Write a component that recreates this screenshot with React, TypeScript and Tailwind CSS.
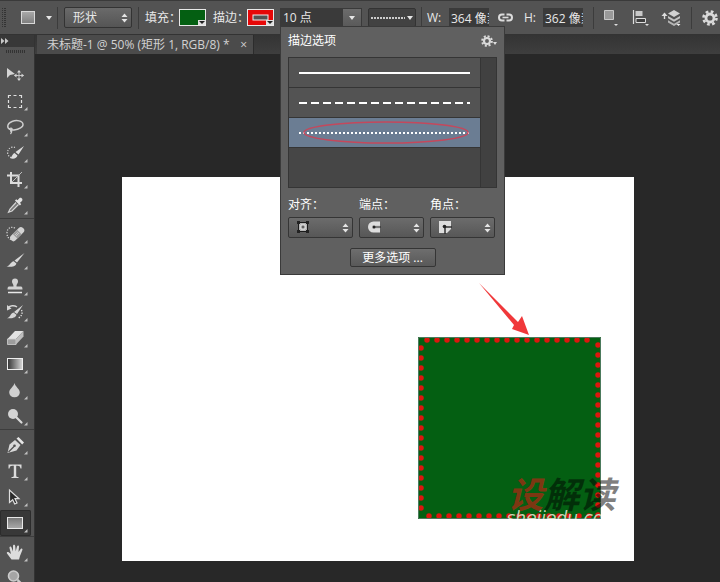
// Image editor window: options bar, tool column, document canvas and the
// stroke options panel that hangs from the stroke width field.
import { useState } from "react";
import type { ReactNode } from "react";

const TOOL_GROUPS = [
  ["move", "marquee", "lasso", "quick-select", "crop", "eyedropper"],
  ["healing", "brush", "stamp", "history-brush", "eraser", "gradient", "blur", "dodge"],
  ["pen", "type", "path-select", "rectangle"],
  ["hand", "zoom"],
];

const TOOL_ART: Record<string, ReactNode> = {
  move: (
    <>
      <path d="M2 3v10l3-3 5-1z" fill="#d4d4d4" />
      <path d="M14 6v9M9.500 10.500h9" stroke="#c4c4c4" strokeWidth="1" />
      <path d="M14 5l2 2.500h-4zM14 16l2-2.500h-4zM9 10.500l2.500-2v4zM19 10.500l-2.500-2v4z" fill="#d4d4d4" />
    </>
  ),
  marquee: (
    <path d="M3.500 7V4.500H6M8.500 4.500h3M14 4.500h2.500V7M16.500 9v3M16.500 14v2.500H14M11.500 16.500h-3M6 16.500H3.500V14M3.500 12V9" fill="none" stroke="#e0e0e0" strokeWidth="1.200" />
  ),
  lasso: (
    <path d="M5 12.500C1.500 11 2 6.500 7 4.500s10.500-.5 11 2.500-4 5.500-9 6c-2.500.2-4-.4-4-1.200s1.500-1 2 0-.5 2.200-2 2.200M6.500 13c.5 1.500 0 3-1 4" fill="none" stroke="#cfcfcf" strokeWidth="1.400" />
  ),
  "quick-select": (
    <>
      <path d="M10 4.500A5 5 0 1 0 6 14.500" fill="none" stroke="#d8d8d8" strokeWidth="1.200" strokeDasharray="1.200 1.400" />
      <path d="M19 3l-5.500 8.500-3-2.500zM9.500 10l3 2.500c-.5 3-4.500 4-7.500 2.500 2-.5 2-4 4.500-5z" fill="#dedede" />
    </>
  ),
  crop: (
    <>
      <path d="M6 3v11h11M2 6.500h11.500V18" fill="none" stroke="#dcdcdc" strokeWidth="2" />
      <path d="M7 13l10-10" stroke="#bdbdbd" strokeWidth="1" />
    </>
  ),
  eyedropper: (
    <>
      <path d="M10 5.500l1.200-1.200 1.300 1 1.800-2c1.700-1.500 4.200 1 2.700 2.700l-2 1.800 1.200 1.400-1.300 1.300z" fill="#e2e2e2" />
      <path d="M11 7.500L5 14l-1.500 3.200L7 16l6.500-6.500" fill="#777" stroke="#d5d5d5" strokeWidth="1.200" />
    </>
  ),
  healing: (
    <>
      <path d="M10 4C5 2 2 5 2 9s2 6 4 6.500" fill="none" stroke="#d8d8d8" strokeWidth="1.200" strokeDasharray="1.200 1.400" />
      <g transform="rotate(-45 12 10)">
        <rect x="3.500" y="7" width="17" height="6.500" rx="3" fill="#d2d2d2" />
        <rect x="9" y="7" width="6" height="6.500" fill="#999" />
        <path d="M10.500 8.500v4M12 8.500v4M13.500 8.500v4" stroke="#eee" strokeWidth=".8" strokeDasharray="1 1" />
      </g>
    </>
  ),
  brush: (
    <path d="M19.500 3l-7.500 9.500-2.500-2zM8.800 11.200l2.600 2.200c-1 3.600-6 3.600-9.900 3.200 3.500-.6 4-5 7.300-5.400z" fill="#d8d8d8" />
  ),
  stamp: (
    <>
      <path d="M10 2.500a3 3 0 0 1 3 3c0 2-1.500 2-1.500 5h4.500c1 0 1.500 1 1.500 3h-15c0-2 .5-3 1.500-3h4.500c0-3-1.500-3-1.500-5a3 3 0 0 1 3-3z" fill="#d2d2d2" />
      <path d="M3 16.500h14" stroke="#e8e8e8" strokeWidth="1.500" />
    </>
  ),
  "history-brush": (
    <>
      <path d="M18 3l-6 9-3-2zM8.500 10.500l3 2.200c-1 3.500-5.500 3.800-9.500 3.500 3.500-1 3.500-5 6.500-5.700z" fill="#d5d5d5" />
      <path d="M3 6c2-2.500 6-3 9-1" fill="none" stroke="#d5d5d5" strokeWidth="1.500" />
      <path d="M2 3v5.500l4.500-2z" fill="#d5d5d5" />
      <path d="M16.500 8c1.500 3 0 6.500-3 8" fill="none" stroke="#e5e5e5" strokeWidth="1.300" strokeDasharray="1.300 1.300" />
    </>
  ),
  eraser: (
    <>
      <path d="M10 3h8.500L11 11H2.500z" fill="#e2e2e2" />
      <path d="M2.500 11H11v5.500H2.500z" fill="#9d9d9d" stroke="#d0d0d0" strokeWidth=".8" />
      <path d="M18.500 3v5.500L11 16.500V11z" fill="#bdbdbd" />
    </>
  ),
  gradient: (
    <>
      <defs>
        <linearGradient id="ramp">
          <stop offset="0" stopColor="#333" />
          <stop offset="1" stopColor="#d8d8d8" />
        </linearGradient>
      </defs>
      <rect x="2.500" y="4.500" width="15" height="11" fill="url(#ramp)" stroke="#eee" />
    </>
  ),
  blur: <path d="M9.500 3c1 4 5.300 6 5.300 9.500a5.300 4.800 0 0 1-10.600 0C4.200 9 8.500 7 9.500 3z" fill="#d0d0d0" />,
  dodge: (
    <>
      <circle cx="8" cy="8" r="5" fill="#d4d4d4" />
      <path d="M11.500 11.500l5 5" stroke="#d8d8d8" strokeWidth="2.200" strokeLinecap="round" />
    </>
  ),
  pen: (
    <>
      <path d="M2.500 18l2-8.500L10 5l5.500 5-4 5.500z" fill="#d8d8d8" />
      <path d="M11.500 3.500l2-1.500L19 7.500l-1.800 2z" fill="#e6e6e6" />
      <path d="M3.500 17l5.500-5.500" stroke="#505050" strokeWidth="1.200" />
      <circle cx="9.500" cy="10.800" r="1.300" fill="#505050" />
    </>
  ),
  type: (
    <path d="M3.500 3.500h13v4h-1c-.4-2-1-2.700-3-2.700h-1.300v9.700c0 1.200.5 1.500 2.300 1.600v.9h-7v-.9c1.800-.1 2.300-.4 2.300-1.600V4.800H7.500c-2 0-2.600.7-3 2.700h-1z" fill="#dcdcdc" />
  ),
  "path-select": (
    <path d="M4.500 3v12.500l3.200-2.800 2 4.300 2.300-1-2-4.300h4z" fill="#2b2b2b" stroke="#dedede" strokeWidth="1.200" />
  ),
  rectangle: (
    <>
      <defs>
        <linearGradient id="plate" x2="0" y2="1">
          <stop offset="0" stopColor="#777" />
          <stop offset="1" stopColor="#aaa" />
        </linearGradient>
      </defs>
      <rect x="2.500" y="4.500" width="15" height="11" fill="url(#plate)" stroke="#e8e8e8" />
    </>
  ),
  hand: (
    <path d="M6.500 17.500L2 11.500c-.8-1.300.8-2 1.700-1.200L6 12 4.500 6C4.200 4.500 6 4 6.500 5.400L8 9.500 8 4c0-1.600 2-1.600 2.200 0l.5 5.300L12 4.500c.4-1.400 2.200-1.100 2 .4L13.500 10l2-2.800c.8-1.200 2.400-.4 1.900.9L15 14l-1 3.500z" fill="#dcdcdc" />
  ),
  zoom: (
    <>
      <circle cx="8.500" cy="8" r="5" fill="#a5a5a5" stroke="#ccc" strokeWidth="1.600" />
      <path d="M12.500 12l5 5" stroke="#ccc" strokeWidth="2.500" />
    </>
  ),
};

function Gear({ size }: { size: number }) {
  return (
    <svg width={size} height={size} viewBox="0 0 16 16" className="block shrink-0">
      <circle cx="8" cy="8" r="6.500" fill="none" stroke="#dadada" strokeWidth="2.600" strokeDasharray="2.700 2.400" />
      <circle cx="8" cy="8" r="4" fill="none" stroke="#dadada" strokeWidth="2.800" />
    </svg>
  );
}

function UpDown() {
  return (
    <svg width="7" height="10" viewBox="0 0 7 10" className="pointer-events-none absolute right-1 top-1/2 -translate-y-1/2">
      <path d="M0.500 4L3.500 .5L6.500 4zM.5 6L3.500 9.500L6.500 6z" fill="#e4e4e4" />
    </svg>
  );
}

function DownArrow() {
  return (
    <svg width="6" height="4" viewBox="0 0 6 4" className="block shrink-0">
      <path d="M0 0h6L3 4z" fill="#e6e6e6" />
    </svg>
  );
}

function Divider() {
  return <span className="h-[22px] w-px shrink-0 bg-[#3c3c3c]" />;
}

function Swatch({ label, children }: { label: string; children: ReactNode }) {
  return (
    <button type="button" aria-label={label} className="ml-1 h-[17px] w-[27px] shrink-0">
      <svg width="27" height="17" viewBox="0 0 27 17" className="block">
        {children}
        <rect x=".5" y=".5" width="26" height="16" fill="none" stroke="#e8e8e8" />
        <path d="M19 11h7v5h-7z" fill="#e0e0e0" />
        <path d="M20 12h6l-3 3z" fill="#222" />
      </svg>
    </button>
  );
}

function StrokeSelect({ id, label, children }: { id: string; label: string; children: ReactNode }) {
  return (
    <div className="w-[65px]">
      <label htmlFor={id} className="block h-[21px] leading-[18px]">
        {label}
      </label>
      <div className="relative">
        <select
          id={id}
          className="block h-[21px] w-full appearance-none rounded-[2px] border border-[#353535] bg-linear-to-b from-[#6c6c6c] to-[#575757]"
        >
          <option value="default" />
        </select>
        <svg width="14" height="14" viewBox="0 0 14 14" className="pointer-events-none absolute left-2 top-[3px]">
          {children}
        </svg>
        <UpDown />
      </div>
    </div>
  );
}

const STROKE_STYLES = [
  { id: "solid", dash: "none" },
  { id: "dashed", dash: "8 4" },
  { id: "dotted", dash: "2 2" },
];

function StrokePanel() {
  const [selected, setSelected] = useState("dotted");
  return (
    <section className="absolute left-0 top-[18px] z-10 w-[225px] border border-[#3a3a3a] bg-[#606060] px-[7px] pb-[7px] text-white">
      <header className="flex h-[30px] items-center justify-between">
        <h2 className="pb-0.5 leading-4">描边选项</h2>
        <button type="button" aria-label="面板菜单" className="flex items-end pb-0.5">
          <Gear size={12} />
          <svg width="4" height="3" viewBox="0 0 4 3" className="mb-0.5">
            <path d="M0 0h4L2 3z" fill="#ddd" />
          </svg>
        </button>
      </header>
      <div className="flex h-[131px] border border-[#353535] bg-[#464646]">
        <ul className="flex-1">
          {STROKE_STYLES.map((s) => (
            <li key={s.id} className="border-b border-[#353535]">
              <button
                type="button"
                aria-label={s.id}
                onClick={() => setSelected(s.id)}
                className={`block h-[29px] w-full ${selected === s.id ? "bg-[#6b7d93]" : "bg-[#535353]"}`}
              >
                <svg viewBox="0 0 191 29" className="block h-full w-full">
                  <line x1="10" y1="15" x2="181" y2="15" stroke="#fff" strokeWidth="2" strokeDasharray={s.dash} />
                  {s.id === "dotted" && (
                    <ellipse cx="97" cy="14.500" rx="82" ry="10.500" fill="none" stroke="#c4485c" strokeWidth="1.500" />
                  )}
                </svg>
              </button>
            </li>
          ))}
        </ul>
        <div className="w-4 border-l border-[#353535] bg-[#414141]" />
      </div>
      <div className="mt-2 flex gap-[6px]">
        <StrokeSelect id="align" label="对齐：">
          <path d="M2.500 2.500h9v9h-9z" fill="#b5b5b5" stroke="#1c1c1c" />
          <path d="M5 5h4v4H5z" fill="#606060" stroke="#eee" />
          <path d="M1 1h3v3H1zM10 1h3v3h-3zM1 10h3v3H1zM10 10h3v3h-3z" fill="#222" />
        </StrokeSelect>
        <StrokeSelect id="cap" label="端点：">
          <path d="M13 1.500H6.500a5.500 5.500 0 0 0 0 11H13V9H7V5h6z" fill="#ddd" />
          <path d="M5 5h8v4H5z" fill="#d0d0d0" />
          <path d="M7 7h7" stroke="#222" />
          <circle cx="7" cy="7" r="1.500" fill="#222" />
        </StrokeSelect>
        <StrokeSelect id="corner" label="角点：">
          <path d="M1 1h12v8l-4 4H1z" fill="#ddd" />
          <path d="M7 14V7h7" fill="none" stroke="#333" strokeWidth="1.500" />
          <circle cx="6.500" cy="6.500" r="1.800" fill="#222" />
        </StrokeSelect>
      </div>
      <button
        type="button"
        className="mx-auto mt-[10px] block h-[19px] w-[86px] rounded-[2px] border border-[#353535] bg-linear-to-b from-[#6e6e6e] to-[#595959] leading-4"
      >
        更多选项 ...
      </button>
    </section>
  );
}

function OptionsBar() {
  return (
    <header className="flex h-[35px] shrink-0 items-center border-b border-t border-b-[#333] border-t-[#3a3a3a] bg-[#535353] text-[#e8e8e8]">
      <svg width="4" height="20" viewBox="0 0 4 20" className="ml-0.5 shrink-0">
        <path d="M0 0v20M3 0v20" stroke="#333" strokeWidth="2" strokeDasharray="1 1" />
      </svg>
      <button type="button" aria-label="矩形工具" className="ml-[15px] flex items-center gap-[11px]">
        <span className="h-[13px] w-[14px] border border-[#d8d8d8] bg-linear-to-b from-[#a8a8a8] to-[#808080]" />
        <DownArrow />
      </button>
      <span className="w-[5px] shrink-0" />
      <Divider />
      <div className="relative mx-[6px] w-[68px] shrink-0">
        <select
          aria-label="模式"
          className="block h-[21px] w-full appearance-none rounded-[2px] border border-[#333] bg-linear-to-b from-[#6a6a6a] to-[#555] pl-2 leading-4"
        >
          <option>形状</option>
        </select>
        <UpDown />
      </div>
      <Divider />
      <span className="ml-[6px] w-[30px] shrink-0 whitespace-nowrap">填充：</span>
      <Swatch label="填充">
        <rect width="27" height="17" fill="#045f12" />
      </Swatch>
      <span className="ml-[7px] w-[30px] shrink-0 whitespace-nowrap">描边：</span>
      <Swatch label="描边">
        <rect width="27" height="17" fill="#e60808" />
        <rect x="6" y="6" width="15" height="5" fill="#535353" stroke="#eee" />
      </Swatch>
      <div className="relative ml-[6px] flex h-[19px] w-[82px] shrink-0">
        <input
          aria-label="描边宽度"
          defaultValue="10 点"
          className="w-[62px] bg-[#3a3a3a] px-[3px] outline-none"
        />
        <button
          type="button"
          aria-label="描边宽度滑块"
          className="flex flex-1 items-center justify-center border border-[#3a3a3a] bg-linear-to-b from-[#6c6c6c] to-[#5a5a5a]"
        >
          <DownArrow />
        </button>
        <StrokePanel />
      </div>
      <button
        type="button"
        aria-label="描边类型"
        className="ml-[6px] flex h-[19px] w-[48px] shrink-0 items-center gap-0.5 rounded-[2px] border border-[#333] bg-[#424242] px-0.5"
      >
        <svg viewBox="0 0 34 2" className="h-0.5 flex-1">
          <path d="M0 1h34" stroke="#ccc" strokeWidth="2" strokeDasharray="2 1" />
        </svg>
        <DownArrow />
      </button>
      <span className="w-[5px] shrink-0" />
      <Divider />
      <label htmlFor="width" className="ml-[5px] w-[22px] shrink-0">
        W:
      </label>
      <input id="width" defaultValue="364 像素" className="h-[19px] w-[40px] shrink-0 bg-[#3a3a3a] pl-0.5 outline-none" />
      <svg width="15" height="9" viewBox="0 0 15 9" className="ml-[9px] shrink-0">
        <path d="M6.500 1.500H4a3 3 0 0 0 0 6h2.500M8.500 1.500H11a3 3 0 0 1 0 6H8.500" fill="none" stroke="#dcdcdc" strokeWidth="2" />
        <path d="M4.500 4.500h6" stroke="#dcdcdc" strokeWidth="1.600" />
      </svg>
      <label htmlFor="height" className="ml-[11px] w-[19px] shrink-0">
        H:
      </label>
      <input id="height" defaultValue="362 像素" className="h-[19px] w-[40px] shrink-0 bg-[#3a3a3a] pl-0.5 outline-none" />
      <span className="w-[10px] shrink-0" />
      <Divider />
      <button type="button" aria-label="路径操作" className="ml-[9px] shrink-0">
        <svg width="17" height="18" viewBox="0 0 17 18" className="block">
          <path d="M1.500 1.500h9v9h-9z" fill="#999" stroke="#c8c8c8" />
          <path d="M11 15h4L13 17z" fill="#ddd" />
        </svg>
      </button>
      <button type="button" aria-label="路径对齐" className="ml-[12px] shrink-0">
        <svg width="18" height="18" viewBox="0 0 18 18" className="block">
          <path d="M1.500 1v14" stroke="#ddd" strokeWidth="1.200" />
          <path d="M3.500 2h7v5h-7z" fill="#c8c8c8" />
          <path d="M4 9.500h9.500v4H4z" fill="#3f3f3f" stroke="#ddd" />
          <path d="M13 15h4L15 17z" fill="#ddd" />
        </svg>
      </button>
      <button type="button" aria-label="路径排列方式" className="ml-[11px] shrink-0">
        <svg width="21" height="18" viewBox="0 0 21 18" className="block">
          <path d="M3.500 5v5" stroke="#ddd" strokeWidth="1.400" />
          <path d="M.5 7L3.500 3.500 6.500 7z" fill="#ddd" />
          <path d="M7 4.500L13 1l6 3.500L13 8z" fill="#d2d2d2" />
          <path d="M7 7l6 3.500L19 7v2.200l-6 3.500L7 9.200z" fill="#c4c4c4" />
          <path d="M7 11.200l6 3.500 6-3.500v2.200l-6 3.500-6-3.500z" fill="#b5b5b5" />
          <path d="M15.500 15h4l-2 2z" fill="#eee" />
        </svg>
      </button>
      <span className="w-[9px] shrink-0" />
      <Divider />
      <button type="button" aria-label="设置" className="ml-[10px] shrink-0">
        <Gear size={16} />
      </button>
    </header>
  );
}

function ToolColumn() {
  const [active, setActive] = useState("rectangle");
  return (
    <aside className="flex w-[35px] shrink-0 flex-col overflow-hidden border-r border-[#333] bg-[#535353]">
      <div className="h-3 shrink-0 bg-[#383838] pt-[3px]">
        <svg width="8" height="6" viewBox="0 0 8 6" className="ml-px block">
          <path d="M0 0l3.500 3L0 6zM4 0l3.500 3L4 6z" fill="#c8c8c8" />
        </svg>
      </div>
      <svg width="20" height="15" viewBox="0 0 20 15" className="ml-[6px] block shrink-0">
        <path d="M0 4.500h20" stroke="#333" strokeWidth="3" strokeDasharray="1 1" />
      </svg>
      {TOOL_GROUPS.map((group, i) => (
        <div key={i} className={`shrink-0 ${i > 0 ? "border-t border-[#3d3d3d] pt-0.5" : ""}`}>
          {group.map((tool) => (
            <button
              key={tool}
              type="button"
              aria-label={tool}
              onClick={() => setActive(tool)}
              className={`flex h-[26px] w-[31px] items-center rounded-[2px] pl-[5px] ${
                active === tool ? "bg-[#383838] ring-1 ring-inset ring-[#2c2c2c]" : ""
              }`}
            >
              <svg width="24" height="22" viewBox="0 0 24 22" className="block">
                <g transform="translate(0 1)">{TOOL_ART[tool]}</g>
                {tool !== "move" && tool !== "zoom" && <path d="M22.500 17v3.500H19z" fill="#c0c0c0" />}
              </svg>
            </button>
          ))}
        </div>
      ))}
    </aside>
  );
}

function Artboard() {
  return (
    <div className="relative mx-auto h-[384px] w-[512px] bg-white">
      <div className="absolute left-[296px] top-[160px] h-[182px] w-[183px] overflow-hidden bg-[#045f12]">
        <svg width="183" height="182" viewBox="0 0 183 182" className="block">
          <g fill="none" stroke="#dc160e" strokeWidth="5.500" strokeLinecap="round" strokeDasharray="0 10">
            <path d="M9 3h166" />
            <path d="M3 11v168" />
            <path d="M180 8v172" />
            <path d="M11 179h168" />
          </g>
          <path d="M.5 .5h182v181H.5z" fill="none" stroke="#4c7a5c" />
        </svg>
        <span className="absolute left-[89px] top-[171px] font-['DejaVu_Sans'] text-[17px] italic leading-5 text-[#c9d6b8]">
          shejiedu.co
        </span>
      </div>
      <div className="absolute left-[386px] top-[298px] whitespace-nowrap text-[36px] font-bold italic leading-10 text-black/50">
        <span className="text-[#a02c12]/80">设</span>解读
      </div>
      <svg width="52" height="54" viewBox="0 0 52 54" className="absolute left-[356px] top-[106px]">
        <path d="M1 0L40 39l4-6 7 19-17-6 2-4z" fill="#f0383a" />
      </svg>
    </div>
  );
}

export default function App() {
  return (
    <div className="flex h-screen flex-col overflow-hidden bg-[#282828] font-['Open_Sans','Noto_Sans_CJK_SC',sans-serif] text-[12px]">
      <OptionsBar />
      <div className="flex min-h-0 flex-1">
        <ToolColumn />
        <main className="min-w-0 flex-1">
          <nav className="flex h-[19px] bg-linear-to-b from-[#343434] to-[#3e3e3e] pl-0.5">
            <div className="flex w-[217px] items-center justify-between border-r border-[#2c2c2c] bg-[#4b4b4b] pl-[10px] pr-[6px] text-[#d2d2d2]">
              <span className="leading-4">未标题-1 @ 50% (矩形 1, RGB/8) *</span>
              <button type="button" aria-label="关闭" className="leading-4">
                ×
              </button>
            </div>
          </nav>
          <div className="pt-[123px]">
            <Artboard />
          </div>
        </main>
      </div>
    </div>
  );
}
